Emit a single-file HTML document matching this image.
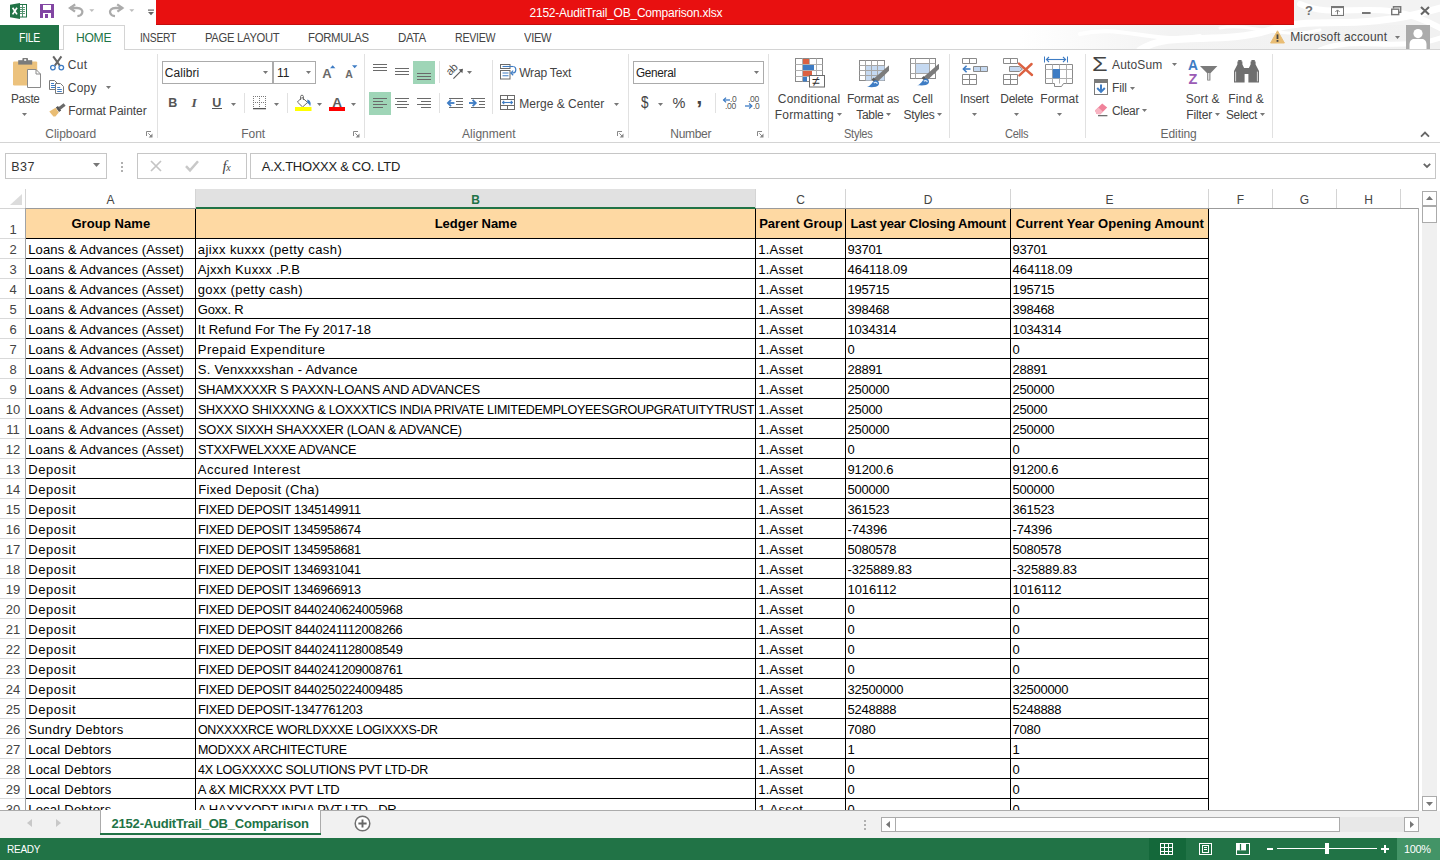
<!DOCTYPE html>
<html lang="en"><head><meta charset="utf-8"><title>2152-AuditTrail_OB_Comparison.xlsx - Excel</title>
<style>
html,body{margin:0;padding:0}
body{width:1440px;height:860px;overflow:hidden;background:#fff;position:relative;font-family:"Liberation Sans",sans-serif;color:#444}
div,svg,span.t{position:absolute}
#title,#tabs,#ribbon,#fbar,#sheetbar,#status,#vscroll{left:0;top:0;width:1440px;height:0}
#grid{left:0;top:0;width:1419px;height:811px;overflow:hidden}
.t{white-space:pre;line-height:1;transform-origin:0 50%}
.clip{overflow:hidden}
svg{overflow:visible;display:block}
</style></head>
<body>
<div id="title">
<div style="left:1020px;top:0;width:420px;height:49px;overflow:hidden"><svg style="left:0;top:0" width="420" height="49" viewBox="0 0 420 49"><defs><linearGradient id="bgw" x1="0" x2="1" y1="0" y2="0"><stop offset="0" stop-color="#fff"/><stop offset="0.35" stop-color="#f3f3f3"/><stop offset="1" stop-color="#f1f1f1"/></linearGradient></defs><rect x="0" y="25" width="420" height="24" fill="url(#bgw)"/><rect x="274" y="0" width="146" height="25" fill="#f3f3f3"/><g fill="none" stroke="#fff" stroke-linecap="round"><path d="M120 50C150 30 200 46 250 30S330 34 420 8" stroke-width="7"/><path d="M60 34C100 24 130 44 180 36" stroke-width="4"/><path d="M280 4C320 22 360 -6 420 28" stroke-width="6"/><path d="M300 50C330 36 380 52 420 38" stroke-width="5"/><path d="M200 28C230 22 260 40 300 30" stroke-width="3"/></g></svg></div>
<div style="left:156px;top:0px;width:1138px;height:25px;background:#e81010;border-bottom:1px solid #c40d0d;box-sizing:border-box;"></div>
<span class="t" style="left:529.50px;top:7px;font-size:12px;color:#fff;letter-spacing:-0.222px;">2152-AuditTrail_OB_Comparison.xlsx</span>
<svg style="left:10px;top:3px" width="17" height="16" viewBox="0 0 17 16"><rect x="8" y="1.5" width="8.5" height="12.5" fill="#fff" stroke="#217346" stroke-width="1"/><path d="M10 4.5h5M10 6.5h5M10 8.5h5M10 10.5h5M12.5 2v12" stroke="#217346" stroke-width="1" opacity=".75"/><path d="M0 1.8L10 0V16L0 14.2z" fill="#217346"/><path d="M2.6 4.8L7 11.4M7 4.8L2.6 11.4" stroke="#fff" stroke-width="1.7"/></svg><svg style="left:40px;top:4px" width="14" height="14" viewBox="0 0 14 14"><path d="M0 0h14v14H0z" fill="#8246a3"/><rect x="3" y="1" width="8" height="5" fill="#fff"/><rect x="3" y="9" width="8" height="5" fill="#fff"/><rect x="5" y="10" width="3" height="4" fill="#8246a3"/></svg><svg style="left:69px;top:4px" width="15" height="14" viewBox="0 0 15 14"><path d="M1 4H8C12 4 14 6.5 13.2 9C12.6 11 10.6 12 8.4 12.2" fill="none" stroke="#ababab" stroke-width="2.3"/><path d="M6.2 0.4L1 4L6 7.6" fill="none" stroke="#ababab" stroke-width="2.3"/></svg><svg style="left:89px;top:9px" width="6" height="4" viewBox="0 0 6 4"><path d="M0.3 0.2h5L2.8 3z" fill="#bdbdbd"/></svg><svg style="left:109px;top:4px" width="15" height="14" viewBox="0 0 15 14"><g transform="translate(14.4 0) scale(-1 1)"><path d="M1 4H8C12 4 14 6.5 13.2 9C12.6 11 10.6 12 8.4 12.2" fill="none" stroke="#ababab" stroke-width="2.3"/><path d="M6.2 0.4L1 4L6 7.6" fill="none" stroke="#ababab" stroke-width="2.3"/></g></svg><svg style="left:129px;top:9px" width="6" height="4" viewBox="0 0 6 4"><path d="M0.3 0.2h5L2.8 3z" fill="#bdbdbd"/></svg><svg style="left:148px;top:9px" width="6" height="7" viewBox="0 0 6 7"><rect x="0" y="0.5" width="6" height="1.2" fill="#666"/><path d="M0 3h6L3 6.2z" fill="#666"/></svg>
<span class="t" style="left:1305px;top:4px;font-size:13px;font-weight:700;color:#707070">?</span><svg style="left:1331px;top:6px" width="14" height="10" viewBox="0 0 14 10"><rect x="0.5" y="0.5" width="12" height="9" fill="none" stroke="#777"/><rect x="0.5" y="0.5" width="12" height="1.6" fill="#777"/><path d="M6.5 8.5V4.2M4.4 6L6.5 3.9L8.6 6" stroke="#777" fill="none" stroke-width="1"/></svg><svg style="left:1362px;top:12px" width="9" height="2" viewBox="0 0 9 2"><rect width="8.6" height="2" fill="#777"/></svg><svg style="left:1391px;top:6px" width="11" height="10" viewBox="0 0 11 10"><path d="M2.5 2.5V0.8h7.2v5.4H8" fill="none" stroke="#777" stroke-width="1.4"/><rect x="0.7" y="3.2" width="7" height="5.4" fill="none" stroke="#777" stroke-width="1.4"/></svg><svg style="left:1420px;top:6px" width="10" height="10" viewBox="0 0 10 10"><path d="M1 1L9 8.5M9 1L1 8.5" stroke="#666" stroke-width="2.1"/></svg>
</div>
<div id="tabs">
<div style="left:59px;top:49px;width:1381px;height:1px;background:#d4d4d4;"></div>
<div style="left:0px;top:25px;width:59px;height:25px;background:#217346;"></div>
<span class="t" style="left:19.20px;top:32px;font-size:12.5px;color:#fff;letter-spacing:-0.300px;transform:scaleX(0.8351);">FILE</span>
<div style="left:63px;top:25px;width:62px;height:25px;background:#fff;border:1px solid #d4d4d4;border-bottom:none;box-sizing:border-box;"></div>
<span class="t" style="left:75.80px;top:32px;font-size:12.5px;color:#217346;letter-spacing:-0.300px;transform:scaleX(0.9699);">HOME</span>
<span class="t" style="left:140.00px;top:32px;font-size:12px;letter-spacing:-0.300px;transform:scaleX(0.8582);">INSERT</span>
<span class="t" style="left:205.00px;top:32px;font-size:12px;letter-spacing:-0.300px;transform:scaleX(0.9347);">PAGE LAYOUT</span>
<span class="t" style="left:308.20px;top:32px;font-size:12px;letter-spacing:-0.300px;transform:scaleX(0.9460);">FORMULAS</span>
<span class="t" style="left:397.80px;top:32px;font-size:12px;letter-spacing:-0.300px;transform:scaleX(0.9613);">DATA</span>
<span class="t" style="left:455.00px;top:32px;font-size:12px;letter-spacing:-0.300px;transform:scaleX(0.8834);">REVIEW</span>
<span class="t" style="left:523.70px;top:32px;font-size:12px;letter-spacing:-0.300px;transform:scaleX(0.9270);">VIEW</span>
<svg style="left:1270px;top:30px" width="15" height="14" viewBox="0 0 15 14"><path d="M7.5 0.8L14.4 13H0.6z" fill="#e9bd74" stroke="#e9bd74" stroke-width="1" stroke-linejoin="round"/><rect x="6.6" y="4.4" width="1.8" height="4.6" fill="#444"/><rect x="6.6" y="10" width="1.8" height="1.8" fill="#444"/></svg><svg style="left:1406px;top:25px" width="24" height="24" viewBox="0 0 24 24"><rect width="24" height="24" fill="#ababab"/><circle cx="12" cy="8.6" r="4.6" fill="#fff"/><path d="M3.5 24V19.5C3.5 15.6 6 14 8 14H16C18 14 20.5 15.6 20.5 19.5V24z" fill="#fff"/></svg>
<span class="t" style="left:1290.20px;top:31px;font-size:12px;letter-spacing:0.172px;">Microsoft account</span>
<svg style="left:1395px;top:36px" width="5" height="3" viewBox="0 0 5 3"><path d="M0 0h5L2.5 3z" fill="#777"/></svg>
</div>
<div id="ribbon">
<div style="left:0px;top:142px;width:1440px;height:1px;background:#d4d4d4;"></div>
<div style="left:157px;top:54px;width:1px;height:84px;background:#e1e1e1;"></div>
<div style="left:364px;top:54px;width:1px;height:84px;background:#e1e1e1;"></div>
<div style="left:628px;top:54px;width:1px;height:84px;background:#e1e1e1;"></div>
<div style="left:768px;top:54px;width:1px;height:84px;background:#e1e1e1;"></div>
<div style="left:949px;top:54px;width:1px;height:84px;background:#e1e1e1;"></div>
<div style="left:1085px;top:54px;width:1px;height:84px;background:#e1e1e1;"></div>
<div style="left:1272px;top:54px;width:1px;height:84px;background:#e1e1e1;"></div>
<div style="left:244px;top:93px;width:1px;height:20px;background:#e1e1e1;"></div>
<div style="left:287px;top:93px;width:1px;height:20px;background:#e1e1e1;"></div>
<div style="left:439px;top:61px;width:1px;height:22px;background:#e1e1e1;"></div>
<div style="left:439px;top:93px;width:1px;height:20px;background:#e1e1e1;"></div>
<div style="left:492px;top:60px;width:1px;height:54px;background:#e1e1e1;"></div>
<div style="left:715px;top:93px;width:1px;height:20px;background:#e1e1e1;"></div>
<span class="t" style="left:45.30px;top:128px;font-size:12px;color:#666;letter-spacing:-0.047px;">Clipboard</span>
<span class="t" style="left:241.20px;top:128px;font-size:12px;color:#666;letter-spacing:-0.005px;">Font</span>
<span class="t" style="left:462.00px;top:128px;font-size:12px;color:#666;letter-spacing:0.016px;">Alignment</span>
<span class="t" style="left:670.30px;top:128px;font-size:12px;color:#666;letter-spacing:-0.300px;">Number</span>
<span class="t" style="left:844.20px;top:128px;font-size:12px;color:#666;letter-spacing:-0.300px;transform:scaleX(0.9234);">Styles</span>
<span class="t" style="left:1005.30px;top:128px;font-size:12px;color:#666;letter-spacing:-0.300px;transform:scaleX(0.9226);">Cells</span>
<span class="t" style="left:1160.50px;top:128px;font-size:12px;color:#666;letter-spacing:-0.067px;">Editing</span>
<svg style="left:146px;top:131px" width="7" height="7" viewBox="0 0 7 7"><path d="M0.5 5V0.5H5" fill="none" stroke="#888"/><path d="M2.3 2.3L5.6 5.6" stroke="#888"/><path d="M6.5 2.6V6.5H2.6z" fill="#888"/></svg>
<svg style="left:353px;top:131px" width="7" height="7" viewBox="0 0 7 7"><path d="M0.5 5V0.5H5" fill="none" stroke="#888"/><path d="M2.3 2.3L5.6 5.6" stroke="#888"/><path d="M6.5 2.6V6.5H2.6z" fill="#888"/></svg>
<svg style="left:617px;top:131px" width="7" height="7" viewBox="0 0 7 7"><path d="M0.5 5V0.5H5" fill="none" stroke="#888"/><path d="M2.3 2.3L5.6 5.6" stroke="#888"/><path d="M6.5 2.6V6.5H2.6z" fill="#888"/></svg>
<svg style="left:757px;top:131px" width="7" height="7" viewBox="0 0 7 7"><path d="M0.5 5V0.5H5" fill="none" stroke="#888"/><path d="M2.3 2.3L5.6 5.6" stroke="#888"/><path d="M6.5 2.6V6.5H2.6z" fill="#888"/></svg>
<svg style="left:13px;top:58px" width="29" height="30" viewBox="0 0 29 30"><rect x="0" y="3.4" width="24.2" height="24" rx="1.2" fill="#ecc27d"/><rect x="5.2" y="2.2" width="14" height="4.4" fill="#7b7b7b"/><rect x="9.4" y="0" width="5.6" height="3.4" rx="0.8" fill="#7b7b7b"/><rect x="11.2" y="1.2" width="2" height="1.6" fill="#fff"/><path d="M14.5 11.5H23L27.5 16V29.5H14.5z" fill="#fff" stroke="#8a8a8a"/><path d="M23 11.5V16H27.5" fill="none" stroke="#8a8a8a"/></svg>
<span class="t" style="left:10.80px;top:93px;font-size:12px;letter-spacing:-0.300px;transform:scaleX(0.9801);">Paste</span>
<svg style="left:22px;top:113px" width="5" height="3" viewBox="0 0 5 3"><path d="M0 0h5L2.5 3z" fill="#777"/></svg>
<svg style="left:50px;top:56px" width="15" height="15" viewBox="0 0 15 15"><path d="M3.2 0.4L9.8 9.6M11.4 0.4L4.8 9.6" stroke="#666" stroke-width="2" fill="none"/><circle cx="2.9" cy="11.6" r="2.3" fill="none" stroke="#3e7cc4" stroke-width="1.3"/><circle cx="11.3" cy="11.6" r="2.3" fill="none" stroke="#3e7cc4" stroke-width="1.3"/></svg>
<span class="t" style="left:67.80px;top:59px;font-size:12px;letter-spacing:0.356px;">Cut</span>
<svg style="left:49px;top:80px" width="16" height="14" viewBox="0 0 16 14"><path d="M0.5 0.5H5.5L8.5 3.5V9.5H0.5z" fill="#fff" stroke="#7a7a7a"/><path d="M2 3.5h3M2 5.5h4.5M2 7.5h4.5" stroke="#3e7cc4"/><path d="M6.5 3.5H11.5L14.5 6.5V13.5H6.5z" fill="#fff" stroke="#7a7a7a"/><path d="M8.2 7.5h3M8.2 9.5h4.6M8.2 11.5h4.6" stroke="#3e7cc4"/></svg>
<span class="t" style="left:67.80px;top:82px;font-size:12px;letter-spacing:0.228px;">Copy</span>
<svg style="left:106px;top:86px" width="5" height="3" viewBox="0 0 5 3"><path d="M0 0h5L2.5 3z" fill="#777"/></svg>
<svg style="left:49px;top:103px" width="17" height="14" viewBox="0 0 17 14"><path d="M9.4 4.2L14.6 0.2L16.6 2.8L11.4 6.8z" fill="#6a6a6a"/><path d="M6.8 4.4L9 3L12.2 7.6L10 9z" fill="#555"/><path d="M0.3 8.6L6.6 4.8L9.8 9.4L6.4 13.6L4.4 13.4z" fill="#e9bd74"/></svg>
<span class="t" style="left:68.20px;top:105px;font-size:12px;letter-spacing:-0.066px;">Format Painter</span>
<div style="left:162px;top:61px;width:111px;height:23px;background:#fff;border:1px solid #ababab;box-sizing:border-box;"></div>
<div style="left:273px;top:61px;width:43px;height:23px;background:#fff;border:1px solid #ababab;box-sizing:border-box;"></div>
<span class="t" style="left:164.80px;top:67px;font-size:12px;color:#222;letter-spacing:0.064px;">Calibri</span>
<svg style="left:263px;top:71px" width="5" height="3" viewBox="0 0 5 3"><path d="M0 0h5L2.5 3z" fill="#777"/></svg>
<span class="t" style="left:277.00px;top:67px;font-size:12px;color:#222;">11</span>
<svg style="left:306px;top:71px" width="5" height="3" viewBox="0 0 5 3"><path d="M0 0h5L2.5 3z" fill="#777"/></svg>
<span class="t" style="left:322.2px;top:66.7px;font-size:13px;font-weight:700;color:#6a6a6a">A</span><svg style="left:329.7px;top:65px" width="6" height="4" viewBox="0 0 6 4"><path d="M0 3.2L2.7 0.2L5.4 3.2z" fill="#3e7cc4"/></svg>
<span class="t" style="left:345.2px;top:68.8px;font-size:10.5px;font-weight:700;color:#6a6a6a">A</span><svg style="left:352px;top:65px" width="6" height="4" viewBox="0 0 6 4"><path d="M0 0.2h5.4L2.7 3.2z" fill="#3e7cc4"/></svg>
<span class="t" style="left:168.30px;top:97px;font-size:12.5px;font-weight:700;color:#555;">B</span>
<span class="t" style="left:191.50px;top:96px;font-size:13.5px;font-style:italic;color:#555;font-family:'Liberation Serif',serif;font-weight:700;">I</span>
<span class="t" style="left:212.30px;top:97px;font-size:12.5px;font-weight:700;color:#555;">U</span>
<div style="left:212px;top:108px;width:10px;height:1px;background:#555;"></div>
<svg style="left:231px;top:103px" width="5" height="3" viewBox="0 0 5 3"><path d="M0 0h5L2.5 3z" fill="#777"/></svg>
<svg style="left:253px;top:96px" width="14" height="14" viewBox="0 0 14 14"><g fill="#7a7a7a" shape-rendering="crispEdges"><rect x="0" y="0" width="1" height="1"/><rect x="0" y="6" width="1" height="1"/><rect x="2" y="0" width="1" height="1"/><rect x="2" y="6" width="1" height="1"/><rect x="4" y="0" width="1" height="1"/><rect x="4" y="6" width="1" height="1"/><rect x="6" y="0" width="1" height="1"/><rect x="6" y="6" width="1" height="1"/><rect x="8" y="0" width="1" height="1"/><rect x="8" y="6" width="1" height="1"/><rect x="10" y="0" width="1" height="1"/><rect x="10" y="6" width="1" height="1"/><rect x="12" y="0" width="1" height="1"/><rect x="12" y="6" width="1" height="1"/><rect x="0" y="0" width="1" height="1"/><rect x="6" y="0" width="1" height="1"/><rect x="12" y="0" width="1" height="1"/><rect x="0" y="2" width="1" height="1"/><rect x="6" y="2" width="1" height="1"/><rect x="12" y="2" width="1" height="1"/><rect x="0" y="4" width="1" height="1"/><rect x="6" y="4" width="1" height="1"/><rect x="12" y="4" width="1" height="1"/><rect x="0" y="6" width="1" height="1"/><rect x="6" y="6" width="1" height="1"/><rect x="12" y="6" width="1" height="1"/><rect x="0" y="8" width="1" height="1"/><rect x="6" y="8" width="1" height="1"/><rect x="12" y="8" width="1" height="1"/><rect x="0" y="10" width="1" height="1"/><rect x="6" y="10" width="1" height="1"/><rect x="12" y="10" width="1" height="1"/></g><rect x="0" y="12" width="13" height="1.3" fill="#555"/></svg>
<svg style="left:274px;top:103px" width="5" height="3" viewBox="0 0 5 3"><path d="M0 0h5L2.5 3z" fill="#777"/></svg>
<svg style="left:295px;top:94px" width="17" height="17" viewBox="0 0 17 17"><path d="M7 3.4L12.6 8.4L7.6 13L2.4 8z" fill="#fff" stroke="#6a6a6a" stroke-width="1"/><path d="M5.6 6V2.4C5.6 0.8 8.4 0.8 8.4 2.4V6" fill="none" stroke="#6a6a6a"/><path d="M12.4 5.6C15.4 6.6 16.6 9.6 15 12.4C14.6 10.4 13.6 9.6 12.2 9z" fill="#3e7cc4"/><rect x="0" y="13" width="16.5" height="4" fill="#ffff00"/></svg>
<svg style="left:317px;top:103px" width="5" height="3" viewBox="0 0 5 3"><path d="M0 0h5L2.5 3z" fill="#777"/></svg>
<span class="t" style="left:332.2px;top:96px;font-size:13.5px;font-weight:700;color:#5e5e5e">A</span><svg style="left:329px;top:107px" width="16" height="4" viewBox="0 0 16 4"><rect width="16" height="4" fill="#ff0000"/></svg>
<svg style="left:351px;top:103px" width="5" height="3" viewBox="0 0 5 3"><path d="M0 0h5L2.5 3z" fill="#777"/></svg>
<div style="left:413px;top:61px;width:22px;height:23px;background:#9fd5b7;"></div>
<div style="left:369px;top:92px;width:22px;height:23px;background:#9fd5b7;"></div>
<div style="left:373px;top:64px;width:14px;height:1px;background:#6a6a6a"></div><div style="left:373px;top:67px;width:14px;height:1px;background:#6a6a6a"></div><div style="left:373px;top:70px;width:14px;height:1px;background:#6a6a6a"></div>
<div style="left:395px;top:68px;width:14px;height:1px;background:#6a6a6a"></div><div style="left:395px;top:71px;width:14px;height:1px;background:#6a6a6a"></div><div style="left:395px;top:74px;width:14px;height:1px;background:#6a6a6a"></div>
<div style="left:417px;top:73px;width:14px;height:1px;background:#6a6a6a"></div><div style="left:417px;top:76px;width:14px;height:1px;background:#6a6a6a"></div><div style="left:417px;top:79px;width:14px;height:1px;background:#6a6a6a"></div>
<div style="left:373px;top:98px;width:14px;height:1px;background:#6a6a6a"></div><div style="left:373px;top:101px;width:10px;height:1px;background:#6a6a6a"></div><div style="left:373px;top:104px;width:14px;height:1px;background:#6a6a6a"></div><div style="left:373px;top:107px;width:10px;height:1px;background:#6a6a6a"></div>
<div style="left:395.0px;top:98px;width:14px;height:1px;background:#6a6a6a"></div><div style="left:397.0px;top:101px;width:10px;height:1px;background:#6a6a6a"></div><div style="left:395.0px;top:104px;width:14px;height:1px;background:#6a6a6a"></div><div style="left:397.0px;top:107px;width:10px;height:1px;background:#6a6a6a"></div>
<div style="left:417px;top:98px;width:14px;height:1px;background:#6a6a6a"></div><div style="left:421px;top:101px;width:10px;height:1px;background:#6a6a6a"></div><div style="left:417px;top:104px;width:14px;height:1px;background:#6a6a6a"></div><div style="left:421px;top:107px;width:10px;height:1px;background:#6a6a6a"></div>
<span class="t" style="left:445.8px;top:64.2px;font-size:11px;color:#505050;transform:rotate(-45deg);transform-origin:50% 50%;letter-spacing:-0.3px">ab</span><svg style="left:447px;top:63px" width="17" height="17" viewBox="0 0 17 17"><path d="M6.4 15.6L14.4 7.6" stroke="#5a5a5a" stroke-width="1.2"/><path d="M16 5.8L15.4 10.2L11.6 6.4z" fill="#5a5a5a"/></svg>
<svg style="left:467px;top:71px" width="5" height="3" viewBox="0 0 5 3"><path d="M0 0h5L2.5 3z" fill="#777"/></svg>
<svg style="left:447px;top:96px" width="17" height="13" viewBox="0 0 17 13"><path d="M2 2.5h14M9 5.5h7M9 8.5h7M2 11.5h14" stroke="#6a6a6a" fill="none"/><rect x="0" y="4" width="8.4" height="6" fill="#fff"/><path d="M1 7H7.4" stroke="#3e7cc4" stroke-width="1.8"/><path d="M4 3.8L0.9 7L4 10.2" stroke="#3e7cc4" stroke-width="1.8" fill="none"/></svg>
<svg style="left:469px;top:96px" width="17" height="13" viewBox="0 0 17 13"><path d="M2 2.5h14M10 5.5h6M10 8.5h6M2 11.5h14" stroke="#6a6a6a" fill="none"/><rect x="0" y="4" width="8.4" height="6" fill="#fff"/><path d="M0 7H6.4" stroke="#3e7cc4" stroke-width="1.8"/><path d="M3.6 3.8L6.8 7L3.6 10.2" stroke="#3e7cc4" stroke-width="1.8" fill="none"/></svg>
<svg style="left:500px;top:64px" width="17" height="16" viewBox="0 0 17 16"><rect x="0.5" y="0.5" width="9.5" height="4" fill="#fff" stroke="#6a6a6a"/><rect x="0.5" y="6.5" width="9.5" height="8.5" fill="#fff" stroke="#6a6a6a"/><path d="M2.5 2.5h11" stroke="#3e7cc4" stroke-width="1.1"/><path d="M2.5 9h6M2.5 11.8h6" stroke="#3e7cc4" stroke-width="1.1"/><path d="M13.5 2.5C16.6 3 16.6 8.8 13.4 8.9H11.4" fill="none" stroke="#3e7cc4" stroke-width="1.2"/><path d="M13.2 6.6L10.8 8.9L13.2 11.2" fill="none" stroke="#3e7cc4" stroke-width="1.2"/></svg>
<span class="t" style="left:519.20px;top:67px;font-size:12px;letter-spacing:-0.185px;">Wrap Text</span>
<svg style="left:500px;top:95px" width="16" height="16" viewBox="0 0 16 16"><rect x="0.5" y="0.5" width="14" height="14" fill="#fff" stroke="#6a6a6a"/><path d="M0.5 4.5h14M0.5 10.5h14M7.5 0.5v4M7.5 10.5v4" stroke="#6a6a6a" fill="none"/><path d="M2.6 7.5h9.8" stroke="#3e7cc4" stroke-width="1.1"/><path d="M4.2 5.9L2.6 7.5L4.2 9.1M10.8 5.9L12.4 7.5L10.8 9.1" stroke="#3e7cc4" fill="none" stroke-width="1.1"/></svg>
<span class="t" style="left:519.20px;top:98px;font-size:12px;letter-spacing:0.031px;">Merge &amp; Center</span>
<svg style="left:614px;top:103px" width="5" height="3" viewBox="0 0 5 3"><path d="M0 0h5L2.5 3z" fill="#777"/></svg>
<div style="left:633px;top:61px;width:131px;height:23px;background:#fff;border:1px solid #ababab;box-sizing:border-box;"></div>
<span class="t" style="left:636.20px;top:67px;font-size:12px;color:#222;letter-spacing:-0.300px;transform:scaleX(0.9804);">General</span>
<svg style="left:754px;top:71px" width="5" height="3" viewBox="0 0 5 3"><path d="M0 0h5L2.5 3z" fill="#777"/></svg>
<span class="t" style="left:640.60px;top:94px;font-size:16.5px;transform:scaleX(0.82);">$</span>
<svg style="left:658px;top:103px" width="5" height="3" viewBox="0 0 5 3"><path d="M0 0h5L2.5 3z" fill="#777"/></svg>
<span class="t" style="left:672.50px;top:96px;font-size:14.5px;">%</span>
<span class="t" style="left:696.30px;top:98px;font-size:22px;font-weight:700;">’</span>
<span class="t" style="left:730px;top:95px;font-size:8.5px;color:#555;letter-spacing:-0.3px">.0</span><span class="t" style="left:725px;top:102px;font-size:8.5px;color:#555;letter-spacing:-0.3px">.00</span><svg style="left:723px;top:97px" width="8" height="6" viewBox="0 0 8 6"><path d="M0.6 3H7" stroke="#3e7cc4" stroke-width="1.3"/><path d="M3 0.6L0.6 3L3 5.4" fill="none" stroke="#3e7cc4" stroke-width="1.3"/></svg>
<span class="t" style="left:748px;top:95px;font-size:8.5px;color:#555;letter-spacing:-0.3px">.00</span><span class="t" style="left:753px;top:102px;font-size:8.5px;color:#555;letter-spacing:-0.3px">.0</span><svg style="left:745px;top:103px" width="8" height="6" viewBox="0 0 8 6"><path d="M0 3H6.6" stroke="#3e7cc4" stroke-width="1.3"/><path d="M4.2 0.6L6.8 3L4.2 5.4" fill="none" stroke="#3e7cc4" stroke-width="1.3"/></svg>
<svg style="left:795px;top:58px" width="31" height="30" viewBox="0 0 31 30"><rect x="0.5" y="0.5" width="27" height="23" fill="#fff" stroke="#8a8a8a"/><path d="M0.5 6.5h27M0.5 12.5h27M0.5 18.5h27M7.5 0.5v23M14.5 0.5v23M21.5 0.5v23" stroke="#b0b0b0" fill="none"/><rect x="8" y="1" width="6" height="5" fill="#dc6141"/><rect x="8" y="7" width="11" height="5" fill="#3e7cc4"/><rect x="8" y="13" width="9" height="5" fill="#dc6141"/><rect x="8" y="19" width="4" height="4.5" fill="#3e7cc4"/><rect x="14.5" y="17.5" width="15" height="11.5" fill="#fff" stroke="#6a6a6a"/></svg><span class="t" style="left:812.2px;top:74.4px;font-size:14px;color:#333">≠</span>
<span class="t" style="left:777.80px;top:93px;font-size:12px;letter-spacing:0.235px;">Conditional</span>
<span class="t" style="left:774.80px;top:109px;font-size:12px;letter-spacing:0.182px;">Formatting</span>
<svg style="left:837px;top:113px" width="5" height="3" viewBox="0 0 5 3"><path d="M0 0h5L2.5 3z" fill="#777"/></svg>
<svg style="left:859px;top:60px" width="31" height="28" viewBox="0 0 31 28"><rect x="0.5" y="0.5" width="25" height="20" fill="#fff" stroke="#8a8a8a"/><rect x="7" y="6" width="18.5" height="14.5" fill="#c5d9f1"/><path d="M0.5 5.5h25M0.5 10.5h25M0.5 15.5h25M6.5 0.5v20M12.5 0.5v20M18.5 0.5v20" stroke="#a6a6a6" fill="none"/><g transform="translate(0 0)"><path d="M15.2 18.2L29.2 6L30 5.6L30 10.8L18.6 21.8z" fill="#7b7b7b"/><path d="M12.6 19.6L14.8 17.6L19 21.6L16.8 23.8z" fill="#5e5e5e"/><path d="M8 27C12 26 13 22.2 15.4 20.6C18 19.4 21.2 22 19.6 25C18 27.6 13 27.2 8 27z" fill="#3e7cc4"/><path d="M14.8 23C16 21.8 18 22.2 18.2 23.8" fill="none" stroke="#dbe8f6" stroke-width="1.3"/></g></svg>
<span class="t" style="left:847.00px;top:93px;font-size:12px;letter-spacing:-0.227px;">Format as</span>
<span class="t" style="left:856.20px;top:109px;font-size:12px;letter-spacing:-0.300px;">Table</span>
<svg style="left:886px;top:113px" width="5" height="3" viewBox="0 0 5 3"><path d="M0 0h5L2.5 3z" fill="#777"/></svg>
<svg style="left:910px;top:58px" width="31" height="28" viewBox="0 0 31 28"><rect x="0.5" y="0.5" width="25" height="20" fill="#fff" stroke="#8a8a8a"/><path d="M0.5 5.5h25M0.5 15.5h25M5.5 0.5v20M19.5 0.5v20" stroke="#a6a6a6" fill="none"/><rect x="6" y="6" width="13" height="9" fill="#c5d9f1"/><g transform="translate(-1 0.3)"><path d="M15.2 18.2L29.2 6L30 5.6L30 10.8L18.6 21.8z" fill="#7b7b7b"/><path d="M12.6 19.6L14.8 17.6L19 21.6L16.8 23.8z" fill="#5e5e5e"/><path d="M8 27C12 26 13 22.2 15.4 20.6C18 19.4 21.2 22 19.6 25C18 27.6 13 27.2 8 27z" fill="#3e7cc4"/><path d="M14.8 23C16 21.8 18 22.2 18.2 23.8" fill="none" stroke="#dbe8f6" stroke-width="1.3"/></g></svg>
<span class="t" style="left:912.50px;top:93px;font-size:12px;letter-spacing:-0.057px;">Cell</span>
<span class="t" style="left:903.50px;top:109px;font-size:12px;letter-spacing:-0.300px;">Styles</span>
<svg style="left:937px;top:113px" width="5" height="3" viewBox="0 0 5 3"><path d="M0 0h5L2.5 3z" fill="#777"/></svg>
<svg style="left:962px;top:58px" width="27" height="27" viewBox="0 0 27 27"><path d="M0.5 0.5h14v5h-14zM7.5 0.5v5" fill="#fff" stroke="#8a8a8a"/><path d="M11.5 8.5h14v5h-14z" fill="#c5d9f1" stroke="#8a8a8a"/><path d="M18.5 8.5v5" stroke="#8a8a8a"/><path d="M0.5 16.5h14v10h-14zM0.5 21.5h14M7.5 16.5v10" fill="#fff" stroke="#8a8a8a"/><path d="M1.4 11H8.5" stroke="#3e7cc4" stroke-width="1.6"/><path d="M4.6 7.8L1.4 11L4.6 14.2" fill="none" stroke="#3e7cc4" stroke-width="1.6"/></svg>
<span class="t" style="left:960.00px;top:93px;font-size:12px;letter-spacing:-0.163px;">Insert</span>
<svg style="left:972px;top:113px" width="5" height="3" viewBox="0 0 5 3"><path d="M0 0h5L2.5 3z" fill="#777"/></svg>
<svg style="left:1003px;top:58px" width="30" height="28" viewBox="0 0 30 28"><path d="M0.5 0.5h14v5h-14zM7.5 0.5v5" fill="#fff" stroke="#8a8a8a"/><path d="M6.5 8.5h10l3 2.5l-3 2.5h-10z" fill="#c5d9f1" stroke="#8a8a8a"/><path d="M0.5 16.5h14v10h-14zM0.5 21.5h14M7.5 16.5v10" fill="#fff" stroke="#8a8a8a"/><path d="M16 5.6L29 17M28.6 6L16.4 17.4" stroke="#dc6141" stroke-width="2.4" fill="none" stroke-linecap="round"/></svg>
<span class="t" style="left:1000.30px;top:93px;font-size:12px;letter-spacing:-0.297px;">Delete</span>
<svg style="left:1014px;top:113px" width="5" height="3" viewBox="0 0 5 3"><path d="M0 0h5L2.5 3z" fill="#777"/></svg>
<svg style="left:1044px;top:56px" width="29" height="32" viewBox="0 0 29 32"><path d="M0.5 0.5v6M23.5 0.5v6" stroke="#3e7cc4"/><path d="M2.5 3.5h19" stroke="#3e7cc4" stroke-width="1.1"/><path d="M5 1L2.4 3.5L5 6M19 1L21.6 3.5L19 6" fill="none" stroke="#3e7cc4" stroke-width="1.1"/><path d="M1.5 8.5h27v19h-9l-2 3h-7l0-3h-9z" fill="#fff" stroke="#8a8a8a"/><path d="M1.5 13.5h27M1.5 22.5h27M8.5 8.5v19M15.5 8.5v19M22.5 8.5v19" stroke="#b0b0b0" fill="none"/><rect x="8.7" y="13" width="7.3" height="9.2" fill="#3e7cc4"/></svg>
<span class="t" style="left:1040.30px;top:93px;font-size:12px;letter-spacing:0.037px;">Format</span>
<svg style="left:1057px;top:113px" width="5" height="3" viewBox="0 0 5 3"><path d="M0 0h5L2.5 3z" fill="#777"/></svg>
<span class="t" style="left:1092.4px;top:53px;font-size:21px;color:#444;transform:scaleX(1.2)">Σ</span>
<span class="t" style="left:1112.00px;top:59px;font-size:12px;letter-spacing:0.140px;">AutoSum</span>
<svg style="left:1172px;top:63px" width="5" height="3" viewBox="0 0 5 3"><path d="M0 0h5L2.5 3z" fill="#777"/></svg>
<svg style="left:1094px;top:79px" width="15" height="16" viewBox="0 0 15 16"><rect x="0.5" y="0.5" width="13" height="15" fill="#fff" stroke="#7a7a7a"/><rect x="0" y="0" width="14" height="4" fill="#7a7a7a"/><path d="M7 5.6V13" stroke="#3e7cc4" stroke-width="2"/><path d="M3.2 9L7 12.9L10.8 9" fill="none" stroke="#3e7cc4" stroke-width="2"/></svg>
<span class="t" style="left:1112.00px;top:82px;font-size:12px;letter-spacing:-0.176px;">Fill</span>
<svg style="left:1130px;top:87px" width="5" height="3" viewBox="0 0 5 3"><path d="M0 0h5L2.5 3z" fill="#777"/></svg>
<svg style="left:1094px;top:103px" width="15" height="14" viewBox="0 0 15 14"><path d="M1 7.6L8.2 0.6L13.2 4.6L6.4 11.2L2.6 11z" fill="#f0829a"/><path d="M1 7.6L4.4 4.4L8.8 8.6L6.4 11.2L2.6 11z" fill="#f7b4c2"/><path d="M4 12.7h9.4" stroke="#555" stroke-width="1.1"/></svg>
<span class="t" style="left:1112.00px;top:105px;font-size:12px;letter-spacing:-0.300px;">Clear</span>
<svg style="left:1142px;top:109px" width="5" height="3" viewBox="0 0 5 3"><path d="M0 0h5L2.5 3z" fill="#777"/></svg>
<span class="t" style="left:1188.3px;top:57.5px;font-size:14.5px;font-weight:700;color:#3e7cc4;transform:scaleX(0.95)">A</span><span class="t" style="left:1188.6px;top:72px;font-size:14.5px;font-weight:700;color:#9b5bb5;">Z</span><svg style="left:1200px;top:65.5px" width="18" height="16" viewBox="0 0 18 16"><path d="M0 0H17.4L10.4 7.2V14.6H7.2V7.2z" fill="#7b7b7b"/><rect x="8.2" y="7" width="1.2" height="6.8" fill="#fff" opacity=".9"/></svg>
<span class="t" style="left:1185.80px;top:93px;font-size:12px;letter-spacing:0.068px;">Sort &amp;</span>
<span class="t" style="left:1186.20px;top:109px;font-size:12px;letter-spacing:-0.134px;">Filter</span>
<svg style="left:1215px;top:113px" width="5" height="3" viewBox="0 0 5 3"><path d="M0 0h5L2.5 3z" fill="#777"/></svg>
<svg style="left:1233px;top:60px" width="27" height="23" viewBox="0 0 27 23"><path d="M1 22.4V11L4.4 4.4V1.4H9.4V4.4L11.6 9V22.4z" fill="#6f6f6f"/><path d="M26 22.4V11L22.6 4.4V1.4H17.6V4.4L15.4 9V22.4z" fill="#6f6f6f"/><rect x="11" y="8" width="5" height="6" fill="#6f6f6f"/><rect x="5.2" y="0" width="3.4" height="2" fill="#6f6f6f"/><rect x="18.4" y="0" width="3.4" height="2" fill="#6f6f6f"/><path d="M2.6 21.4V11.6M24.4 21.4V11.6" stroke="#d8d8d8" stroke-width="1"/></svg>
<span class="t" style="left:1228.20px;top:93px;font-size:12px;letter-spacing:0.183px;">Find &amp;</span>
<span class="t" style="left:1225.80px;top:109px;font-size:12px;letter-spacing:-0.300px;transform:scaleX(0.9856);">Select</span>
<svg style="left:1260px;top:113px" width="5" height="3" viewBox="0 0 5 3"><path d="M0 0h5L2.5 3z" fill="#777"/></svg>
<svg style="left:1420px;top:131px" width="10" height="7" viewBox="0 0 10 7"><path d="M1 5.6L5 1.6L9 5.6" fill="none" stroke="#666" stroke-width="1.8"/></svg>
</div>
<div id="fbar">
<div style="left:5px;top:153px;width:102px;height:26px;background:#fff;border:1px solid #c6c6c6;box-sizing:border-box;"></div>
<span class="t" style="left:11.20px;top:161px;font-size:12.5px;color:#333;letter-spacing:0.525px;">B37</span>
<svg style="left:93px;top:163px" width="7" height="4" viewBox="0 0 7 4"><path d="M0 0h7L3.5 4z" fill="#777"/></svg>
<div style="left:121px;top:162px;width:2px;height:2px;background:#b0b0b0;"></div>
<div style="left:121px;top:166px;width:2px;height:2px;background:#b0b0b0;"></div>
<div style="left:121px;top:170px;width:2px;height:2px;background:#b0b0b0;"></div>
<div style="left:137px;top:153px;width:110px;height:26px;background:#fff;border:1px solid #c6c6c6;box-sizing:border-box;"></div>
<svg style="left:150px;top:160px" width="12" height="12" viewBox="0 0 12 12"><path d="M1 1L11 11M11 1L1 11" stroke="#c4c4c4" stroke-width="1.7"/></svg><svg style="left:185px;top:160px" width="14" height="12" viewBox="0 0 14 12"><path d="M1 6.2L5 10.4L13 1.2" fill="none" stroke="#c8c8c8" stroke-width="2.5"/></svg><span class="t" style="left:222.5px;top:158.5px;font-size:15px;font-style:italic;font-family:'Liberation Serif',serif;color:#444;letter-spacing:-0.5px">f<span style="font-size:10px;position:relative;top:0.5px">x</span></span>
<div style="left:250px;top:153px;width:1186px;height:26px;background:#fff;border:1px solid #c6c6c6;box-sizing:border-box;"></div>
<span class="t" style="left:261.80px;top:160px;font-size:13px;color:#222;letter-spacing:-0.300px;">A.X.THOXXX &amp; CO. LTD</span>
<svg style="left:1423px;top:163px" width="8" height="6" viewBox="0 0 8 6"><path d="M0.8 0.8L4 4L7.2 0.8" fill="none" stroke="#666" stroke-width="1.8"/></svg>
</div>
<div id="grid">
<div style="left:196px;top:189px;width:560px;height:18px;background:#e1e1e1;"></div>
<div style="left:0px;top:208px;width:25px;height:1px;background:#d4d4d4;"></div>
<div style="left:25px;top:208px;width:1394px;height:1px;background:#9b9b9b;"></div>
<div style="left:196px;top:207px;width:560px;height:2px;background:#217346;"></div>
<div style="left:195px;top:189px;width:1px;height:19px;background:#d4d4d4;"></div>
<span class="t" style="left:106.49px;top:194px;font-size:12px;">A</span>
<div style="left:755px;top:189px;width:1px;height:19px;background:#d4d4d4;"></div>
<span class="t" style="left:471.16px;top:194px;font-size:12px;font-weight:700;color:#217346;">B</span>
<div style="left:845px;top:189px;width:1px;height:19px;background:#d4d4d4;"></div>
<span class="t" style="left:796.16px;top:194px;font-size:12px;">C</span>
<div style="left:1010px;top:189px;width:1px;height:19px;background:#d4d4d4;"></div>
<span class="t" style="left:923.66px;top:194px;font-size:12px;">D</span>
<div style="left:1208px;top:189px;width:1px;height:19px;background:#d4d4d4;"></div>
<span class="t" style="left:1105.49px;top:194px;font-size:12px;">E</span>
<div style="left:1272px;top:189px;width:1px;height:19px;background:#d4d4d4;"></div>
<span class="t" style="left:1236.83px;top:194px;font-size:12px;">F</span>
<div style="left:1336px;top:189px;width:1px;height:19px;background:#d4d4d4;"></div>
<span class="t" style="left:1299.83px;top:194px;font-size:12px;">G</span>
<div style="left:1400px;top:189px;width:1px;height:19px;background:#d4d4d4;"></div>
<span class="t" style="left:1364.16px;top:194px;font-size:12px;">H</span>
<div style="left:25px;top:189px;width:1px;height:19px;background:#d4d4d4;"></div>
<svg style="left:10px;top:194px" width="12" height="11" viewBox="0 0 12 11"><path d="M12 0V11H0z" fill="#dcdcdc"/></svg>
<div style="left:1418px;top:208px;width:1px;height:603px;background:#ababab;"></div>
<div style="left:26px;top:209px;width:1182px;height:29px;background:#fed9a3;"></div>
<div style="left:26px;top:238px;width:1183px;height:1px;background:#000;"></div>
<div style="left:0px;top:238px;width:25px;height:1px;background:#d9d9d9;"></div>
<div style="left:26px;top:258px;width:1183px;height:1px;background:#000;"></div>
<div style="left:0px;top:258px;width:25px;height:1px;background:#d9d9d9;"></div>
<div style="left:26px;top:278px;width:1183px;height:1px;background:#000;"></div>
<div style="left:0px;top:278px;width:25px;height:1px;background:#d9d9d9;"></div>
<div style="left:26px;top:298px;width:1183px;height:1px;background:#000;"></div>
<div style="left:0px;top:298px;width:25px;height:1px;background:#d9d9d9;"></div>
<div style="left:26px;top:318px;width:1183px;height:1px;background:#000;"></div>
<div style="left:0px;top:318px;width:25px;height:1px;background:#d9d9d9;"></div>
<div style="left:26px;top:338px;width:1183px;height:1px;background:#000;"></div>
<div style="left:0px;top:338px;width:25px;height:1px;background:#d9d9d9;"></div>
<div style="left:26px;top:358px;width:1183px;height:1px;background:#000;"></div>
<div style="left:0px;top:358px;width:25px;height:1px;background:#d9d9d9;"></div>
<div style="left:26px;top:378px;width:1183px;height:1px;background:#000;"></div>
<div style="left:0px;top:378px;width:25px;height:1px;background:#d9d9d9;"></div>
<div style="left:26px;top:398px;width:1183px;height:1px;background:#000;"></div>
<div style="left:0px;top:398px;width:25px;height:1px;background:#d9d9d9;"></div>
<div style="left:26px;top:418px;width:1183px;height:1px;background:#000;"></div>
<div style="left:0px;top:418px;width:25px;height:1px;background:#d9d9d9;"></div>
<div style="left:26px;top:438px;width:1183px;height:1px;background:#000;"></div>
<div style="left:0px;top:438px;width:25px;height:1px;background:#d9d9d9;"></div>
<div style="left:26px;top:458px;width:1183px;height:1px;background:#000;"></div>
<div style="left:0px;top:458px;width:25px;height:1px;background:#d9d9d9;"></div>
<div style="left:26px;top:478px;width:1183px;height:1px;background:#000;"></div>
<div style="left:0px;top:478px;width:25px;height:1px;background:#d9d9d9;"></div>
<div style="left:26px;top:498px;width:1183px;height:1px;background:#000;"></div>
<div style="left:0px;top:498px;width:25px;height:1px;background:#d9d9d9;"></div>
<div style="left:26px;top:518px;width:1183px;height:1px;background:#000;"></div>
<div style="left:0px;top:518px;width:25px;height:1px;background:#d9d9d9;"></div>
<div style="left:26px;top:538px;width:1183px;height:1px;background:#000;"></div>
<div style="left:0px;top:538px;width:25px;height:1px;background:#d9d9d9;"></div>
<div style="left:26px;top:558px;width:1183px;height:1px;background:#000;"></div>
<div style="left:0px;top:558px;width:25px;height:1px;background:#d9d9d9;"></div>
<div style="left:26px;top:578px;width:1183px;height:1px;background:#000;"></div>
<div style="left:0px;top:578px;width:25px;height:1px;background:#d9d9d9;"></div>
<div style="left:26px;top:598px;width:1183px;height:1px;background:#000;"></div>
<div style="left:0px;top:598px;width:25px;height:1px;background:#d9d9d9;"></div>
<div style="left:26px;top:618px;width:1183px;height:1px;background:#000;"></div>
<div style="left:0px;top:618px;width:25px;height:1px;background:#d9d9d9;"></div>
<div style="left:26px;top:638px;width:1183px;height:1px;background:#000;"></div>
<div style="left:0px;top:638px;width:25px;height:1px;background:#d9d9d9;"></div>
<div style="left:26px;top:658px;width:1183px;height:1px;background:#000;"></div>
<div style="left:0px;top:658px;width:25px;height:1px;background:#d9d9d9;"></div>
<div style="left:26px;top:678px;width:1183px;height:1px;background:#000;"></div>
<div style="left:0px;top:678px;width:25px;height:1px;background:#d9d9d9;"></div>
<div style="left:26px;top:698px;width:1183px;height:1px;background:#000;"></div>
<div style="left:0px;top:698px;width:25px;height:1px;background:#d9d9d9;"></div>
<div style="left:26px;top:718px;width:1183px;height:1px;background:#000;"></div>
<div style="left:0px;top:718px;width:25px;height:1px;background:#d9d9d9;"></div>
<div style="left:26px;top:738px;width:1183px;height:1px;background:#000;"></div>
<div style="left:0px;top:738px;width:25px;height:1px;background:#d9d9d9;"></div>
<div style="left:26px;top:758px;width:1183px;height:1px;background:#000;"></div>
<div style="left:0px;top:758px;width:25px;height:1px;background:#d9d9d9;"></div>
<div style="left:26px;top:778px;width:1183px;height:1px;background:#000;"></div>
<div style="left:0px;top:778px;width:25px;height:1px;background:#d9d9d9;"></div>
<div style="left:26px;top:798px;width:1183px;height:1px;background:#000;"></div>
<div style="left:0px;top:798px;width:25px;height:1px;background:#d9d9d9;"></div>
<div style="left:26px;top:818px;width:1183px;height:1px;background:#000;"></div>
<div style="left:0px;top:818px;width:25px;height:1px;background:#d9d9d9;"></div>
<div style="left:195px;top:209px;width:1px;height:603px;background:#000;"></div>
<div style="left:755px;top:209px;width:1px;height:603px;background:#000;"></div>
<div style="left:845px;top:209px;width:1px;height:603px;background:#000;"></div>
<div style="left:1010px;top:209px;width:1px;height:603px;background:#000;"></div>
<div style="left:1208px;top:209px;width:1px;height:603px;background:#000;"></div>
<div style="left:25px;top:208px;width:1px;height:604px;background:#a0a3a6;"></div>
<span class="t" style="left:9.38px;top:223px;font-size:13px;">1</span>
<span class="t" style="left:9.38px;top:243px;font-size:13px;">2</span>
<span class="t" style="left:9.38px;top:263px;font-size:13px;">3</span>
<span class="t" style="left:9.38px;top:283px;font-size:13px;">4</span>
<span class="t" style="left:9.38px;top:303px;font-size:13px;">5</span>
<span class="t" style="left:9.38px;top:323px;font-size:13px;">6</span>
<span class="t" style="left:9.38px;top:343px;font-size:13px;">7</span>
<span class="t" style="left:9.38px;top:363px;font-size:13px;">8</span>
<span class="t" style="left:9.38px;top:383px;font-size:13px;">9</span>
<span class="t" style="left:5.77px;top:403px;font-size:13px;">10</span>
<span class="t" style="left:6.25px;top:423px;font-size:13px;">11</span>
<span class="t" style="left:5.77px;top:443px;font-size:13px;">12</span>
<span class="t" style="left:5.77px;top:463px;font-size:13px;">13</span>
<span class="t" style="left:5.77px;top:483px;font-size:13px;">14</span>
<span class="t" style="left:5.77px;top:503px;font-size:13px;">15</span>
<span class="t" style="left:5.77px;top:523px;font-size:13px;">16</span>
<span class="t" style="left:5.77px;top:543px;font-size:13px;">17</span>
<span class="t" style="left:5.77px;top:563px;font-size:13px;">18</span>
<span class="t" style="left:5.77px;top:583px;font-size:13px;">19</span>
<span class="t" style="left:5.77px;top:603px;font-size:13px;">20</span>
<span class="t" style="left:5.77px;top:623px;font-size:13px;">21</span>
<span class="t" style="left:5.77px;top:643px;font-size:13px;">22</span>
<span class="t" style="left:5.77px;top:663px;font-size:13px;">23</span>
<span class="t" style="left:5.77px;top:683px;font-size:13px;">24</span>
<span class="t" style="left:5.77px;top:703px;font-size:13px;">25</span>
<span class="t" style="left:5.77px;top:723px;font-size:13px;">26</span>
<span class="t" style="left:5.77px;top:743px;font-size:13px;">27</span>
<span class="t" style="left:5.77px;top:763px;font-size:13px;">28</span>
<span class="t" style="left:5.77px;top:783px;font-size:13px;">29</span>
<span class="t" style="left:5.77px;top:803px;font-size:13px;">30</span>
<span class="t" style="left:71.40px;top:217px;font-size:13px;font-weight:700;color:#000;letter-spacing:0.087px;">Group Name</span>
<span class="t" style="left:434.70px;top:217px;font-size:13px;font-weight:700;color:#000;letter-spacing:-0.017px;">Ledger Name</span>
<span class="t" style="left:759.20px;top:217px;font-size:13px;font-weight:700;color:#000;letter-spacing:0.011px;">Parent Group</span>
<span class="t" style="left:850.45px;top:217px;font-size:13px;font-weight:700;color:#000;letter-spacing:-0.213px;">Last year Closing Amount</span>
<span class="t" style="left:1015.80px;top:217px;font-size:13px;font-weight:700;color:#000;letter-spacing:0.063px;">Current Year Opening Amount</span>
<span class="t" style="left:28.20px;top:243px;font-size:13px;color:#000;letter-spacing:0.135px;">Loans &amp; Advances (Asset)</span>
<span class="t" style="left:197.75px;top:243px;font-size:13px;color:#000;letter-spacing:0.418px;">ajixx kuxxx (petty cash)</span>
<span class="t" style="left:758.20px;top:243px;font-size:13px;color:#000;letter-spacing:0.240px;">1.Asset</span>
<span class="t" style="left:847.60px;top:243px;font-size:13px;color:#000;letter-spacing:-0.294px;">93701</span>
<span class="t" style="left:1012.60px;top:243px;font-size:13px;color:#000;letter-spacing:-0.294px;">93701</span>
<span class="t" style="left:28.20px;top:263px;font-size:13px;color:#000;letter-spacing:0.135px;">Loans &amp; Advances (Asset)</span>
<span class="t" style="left:197.75px;top:263px;font-size:13px;color:#000;letter-spacing:0.329px;">Ajxxh Kuxxx .P.B</span>
<span class="t" style="left:758.20px;top:263px;font-size:13px;color:#000;letter-spacing:0.240px;">1.Asset</span>
<span class="t" style="left:847.60px;top:263px;font-size:13px;color:#000;letter-spacing:-0.088px;">464118.09</span>
<span class="t" style="left:1012.60px;top:263px;font-size:13px;color:#000;letter-spacing:-0.088px;">464118.09</span>
<span class="t" style="left:28.20px;top:283px;font-size:13px;color:#000;letter-spacing:0.135px;">Loans &amp; Advances (Asset)</span>
<span class="t" style="left:197.75px;top:283px;font-size:13px;color:#000;letter-spacing:0.359px;">goxx (petty cash)</span>
<span class="t" style="left:758.20px;top:283px;font-size:13px;color:#000;letter-spacing:0.240px;">1.Asset</span>
<span class="t" style="left:847.60px;top:283px;font-size:13px;color:#000;letter-spacing:-0.284px;">195715</span>
<span class="t" style="left:1012.60px;top:283px;font-size:13px;color:#000;letter-spacing:-0.284px;">195715</span>
<span class="t" style="left:28.20px;top:303px;font-size:13px;color:#000;letter-spacing:0.135px;">Loans &amp; Advances (Asset)</span>
<span class="t" style="left:197.75px;top:303px;font-size:13px;color:#000;letter-spacing:-0.161px;">Goxx. R</span>
<span class="t" style="left:758.20px;top:303px;font-size:13px;color:#000;letter-spacing:0.240px;">1.Asset</span>
<span class="t" style="left:847.60px;top:303px;font-size:13px;color:#000;letter-spacing:-0.284px;">398468</span>
<span class="t" style="left:1012.60px;top:303px;font-size:13px;color:#000;letter-spacing:-0.284px;">398468</span>
<span class="t" style="left:28.20px;top:323px;font-size:13px;color:#000;letter-spacing:0.135px;">Loans &amp; Advances (Asset)</span>
<span class="t" style="left:197.75px;top:323px;font-size:13px;color:#000;letter-spacing:0.082px;">It Refund For The Fy 2017-18</span>
<span class="t" style="left:758.20px;top:323px;font-size:13px;color:#000;letter-spacing:0.240px;">1.Asset</span>
<span class="t" style="left:847.60px;top:323px;font-size:13px;color:#000;letter-spacing:-0.278px;">1034314</span>
<span class="t" style="left:1012.60px;top:323px;font-size:13px;color:#000;letter-spacing:-0.278px;">1034314</span>
<span class="t" style="left:28.20px;top:343px;font-size:13px;color:#000;letter-spacing:0.135px;">Loans &amp; Advances (Asset)</span>
<span class="t" style="left:197.75px;top:343px;font-size:13px;color:#000;letter-spacing:0.524px;">Prepaid Expenditure</span>
<span class="t" style="left:758.20px;top:343px;font-size:13px;color:#000;letter-spacing:0.240px;">1.Asset</span>
<span class="t" style="left:847.60px;top:343px;font-size:13px;color:#000;">0</span>
<span class="t" style="left:1012.60px;top:343px;font-size:13px;color:#000;">0</span>
<span class="t" style="left:28.20px;top:363px;font-size:13px;color:#000;letter-spacing:0.135px;">Loans &amp; Advances (Asset)</span>
<span class="t" style="left:197.75px;top:363px;font-size:13px;color:#000;letter-spacing:0.253px;">S. Venxxxxshan - Advance</span>
<span class="t" style="left:758.20px;top:363px;font-size:13px;color:#000;letter-spacing:0.240px;">1.Asset</span>
<span class="t" style="left:847.60px;top:363px;font-size:13px;color:#000;letter-spacing:-0.294px;">28891</span>
<span class="t" style="left:1012.60px;top:363px;font-size:13px;color:#000;letter-spacing:-0.294px;">28891</span>
<span class="t" style="left:28.20px;top:383px;font-size:13px;color:#000;letter-spacing:0.135px;">Loans &amp; Advances (Asset)</span>
<span class="t" style="left:197.75px;top:383px;font-size:13px;color:#000;letter-spacing:-0.300px;">SHAMXXXXR S PAXXN-LOANS AND ADVANCES</span>
<span class="t" style="left:758.20px;top:383px;font-size:13px;color:#000;letter-spacing:0.240px;">1.Asset</span>
<span class="t" style="left:847.60px;top:383px;font-size:13px;color:#000;letter-spacing:-0.284px;">250000</span>
<span class="t" style="left:1012.60px;top:383px;font-size:13px;color:#000;letter-spacing:-0.284px;">250000</span>
<span class="t" style="left:28.20px;top:403px;font-size:13px;color:#000;letter-spacing:0.135px;">Loans &amp; Advances (Asset)</span>
<div class="clip" style="left:196px;top:399px;width:559px;height:19px">
<span class="t" style="left:1.75px;top:4px;font-size:13px;color:#000;letter-spacing:-0.300px;transform:scaleX(0.9644);">SHXXXO SHIXXXNG &amp; LOXXXTICS INDIA PRIVATE LIMITEDEMPLOYEESGROUPGRATUITYTRUST</span>
</div>
<span class="t" style="left:758.20px;top:403px;font-size:13px;color:#000;letter-spacing:0.240px;">1.Asset</span>
<span class="t" style="left:847.60px;top:403px;font-size:13px;color:#000;letter-spacing:-0.294px;">25000</span>
<span class="t" style="left:1012.60px;top:403px;font-size:13px;color:#000;letter-spacing:-0.294px;">25000</span>
<span class="t" style="left:28.20px;top:423px;font-size:13px;color:#000;letter-spacing:0.135px;">Loans &amp; Advances (Asset)</span>
<span class="t" style="left:197.75px;top:423px;font-size:13px;color:#000;letter-spacing:-0.300px;transform:scaleX(0.9873);">SOXX SIXXH SHAXXXER (LOAN &amp; ADVANCE)</span>
<span class="t" style="left:758.20px;top:423px;font-size:13px;color:#000;letter-spacing:0.240px;">1.Asset</span>
<span class="t" style="left:847.60px;top:423px;font-size:13px;color:#000;letter-spacing:-0.284px;">250000</span>
<span class="t" style="left:1012.60px;top:423px;font-size:13px;color:#000;letter-spacing:-0.284px;">250000</span>
<span class="t" style="left:28.20px;top:443px;font-size:13px;color:#000;letter-spacing:0.135px;">Loans &amp; Advances (Asset)</span>
<span class="t" style="left:197.75px;top:443px;font-size:13px;color:#000;letter-spacing:-0.300px;transform:scaleX(0.9675);">STXXFWELXXXE ADVANCE</span>
<span class="t" style="left:758.20px;top:443px;font-size:13px;color:#000;letter-spacing:0.240px;">1.Asset</span>
<span class="t" style="left:847.60px;top:443px;font-size:13px;color:#000;">0</span>
<span class="t" style="left:1012.60px;top:443px;font-size:13px;color:#000;">0</span>
<span class="t" style="left:28.20px;top:463px;font-size:13px;color:#000;letter-spacing:0.570px;">Deposit</span>
<span class="t" style="left:197.75px;top:463px;font-size:13px;color:#000;letter-spacing:0.506px;">Accured Interest</span>
<span class="t" style="left:758.20px;top:463px;font-size:13px;color:#000;letter-spacing:0.240px;">1.Asset</span>
<span class="t" style="left:847.60px;top:463px;font-size:13px;color:#000;letter-spacing:-0.199px;">91200.6</span>
<span class="t" style="left:1012.60px;top:463px;font-size:13px;color:#000;letter-spacing:-0.199px;">91200.6</span>
<span class="t" style="left:28.20px;top:483px;font-size:13px;color:#000;letter-spacing:0.570px;">Deposit</span>
<span class="t" style="left:198.25px;top:483px;font-size:13px;color:#000;letter-spacing:0.286px;">Fixed Deposit (Cha)</span>
<span class="t" style="left:758.20px;top:483px;font-size:13px;color:#000;letter-spacing:0.240px;">1.Asset</span>
<span class="t" style="left:847.60px;top:483px;font-size:13px;color:#000;letter-spacing:-0.284px;">500000</span>
<span class="t" style="left:1012.60px;top:483px;font-size:13px;color:#000;letter-spacing:-0.284px;">500000</span>
<span class="t" style="left:28.20px;top:503px;font-size:13px;color:#000;letter-spacing:0.570px;">Deposit</span>
<span class="t" style="left:198.25px;top:503px;font-size:13px;color:#000;letter-spacing:-0.300px;transform:scaleX(0.9774);">FIXED DEPOSIT 1345149911</span>
<span class="t" style="left:758.20px;top:503px;font-size:13px;color:#000;letter-spacing:0.240px;">1.Asset</span>
<span class="t" style="left:847.60px;top:503px;font-size:13px;color:#000;letter-spacing:-0.284px;">361523</span>
<span class="t" style="left:1012.60px;top:503px;font-size:13px;color:#000;letter-spacing:-0.284px;">361523</span>
<span class="t" style="left:28.20px;top:523px;font-size:13px;color:#000;letter-spacing:0.570px;">Deposit</span>
<span class="t" style="left:198.25px;top:523px;font-size:13px;color:#000;letter-spacing:-0.300px;transform:scaleX(0.9717);">FIXED DEPOSIT 1345958674</span>
<span class="t" style="left:758.20px;top:523px;font-size:13px;color:#000;letter-spacing:0.240px;">1.Asset</span>
<span class="t" style="left:847.60px;top:523px;font-size:13px;color:#000;letter-spacing:-0.170px;">-74396</span>
<span class="t" style="left:1012.60px;top:523px;font-size:13px;color:#000;letter-spacing:-0.170px;">-74396</span>
<span class="t" style="left:28.20px;top:543px;font-size:13px;color:#000;letter-spacing:0.570px;">Deposit</span>
<span class="t" style="left:198.25px;top:543px;font-size:13px;color:#000;letter-spacing:-0.300px;transform:scaleX(0.9717);">FIXED DEPOSIT 1345958681</span>
<span class="t" style="left:758.20px;top:543px;font-size:13px;color:#000;letter-spacing:0.240px;">1.Asset</span>
<span class="t" style="left:847.60px;top:543px;font-size:13px;color:#000;letter-spacing:-0.278px;">5080578</span>
<span class="t" style="left:1012.60px;top:543px;font-size:13px;color:#000;letter-spacing:-0.278px;">5080578</span>
<span class="t" style="left:28.20px;top:563px;font-size:13px;color:#000;letter-spacing:0.570px;">Deposit</span>
<span class="t" style="left:198.25px;top:563px;font-size:13px;color:#000;letter-spacing:-0.300px;transform:scaleX(0.9717);">FIXED DEPOSIT 1346931041</span>
<span class="t" style="left:758.20px;top:563px;font-size:13px;color:#000;letter-spacing:0.240px;">1.Asset</span>
<span class="t" style="left:847.60px;top:563px;font-size:13px;color:#000;letter-spacing:-0.148px;">-325889.83</span>
<span class="t" style="left:1012.60px;top:563px;font-size:13px;color:#000;letter-spacing:-0.148px;">-325889.83</span>
<span class="t" style="left:28.20px;top:583px;font-size:13px;color:#000;letter-spacing:0.570px;">Deposit</span>
<span class="t" style="left:198.25px;top:583px;font-size:13px;color:#000;letter-spacing:-0.300px;transform:scaleX(0.9717);">FIXED DEPOSIT 1346966913</span>
<span class="t" style="left:758.20px;top:583px;font-size:13px;color:#000;letter-spacing:0.240px;">1.Asset</span>
<span class="t" style="left:847.60px;top:583px;font-size:13px;color:#000;letter-spacing:-0.117px;">1016112</span>
<span class="t" style="left:1012.60px;top:583px;font-size:13px;color:#000;letter-spacing:-0.117px;">1016112</span>
<span class="t" style="left:28.20px;top:603px;font-size:13px;color:#000;letter-spacing:0.570px;">Deposit</span>
<span class="t" style="left:198.25px;top:603px;font-size:13px;color:#000;letter-spacing:-0.300px;transform:scaleX(0.9781);">FIXED DEPOSIT 8440240624005968</span>
<span class="t" style="left:758.20px;top:603px;font-size:13px;color:#000;letter-spacing:0.240px;">1.Asset</span>
<span class="t" style="left:847.60px;top:603px;font-size:13px;color:#000;">0</span>
<span class="t" style="left:1012.60px;top:603px;font-size:13px;color:#000;">0</span>
<span class="t" style="left:28.20px;top:623px;font-size:13px;color:#000;letter-spacing:0.570px;">Deposit</span>
<span class="t" style="left:198.25px;top:623px;font-size:13px;color:#000;letter-spacing:-0.300px;transform:scaleX(0.9873);">FIXED DEPOSIT 8440241112008266</span>
<span class="t" style="left:758.20px;top:623px;font-size:13px;color:#000;letter-spacing:0.240px;">1.Asset</span>
<span class="t" style="left:847.60px;top:623px;font-size:13px;color:#000;">0</span>
<span class="t" style="left:1012.60px;top:623px;font-size:13px;color:#000;">0</span>
<span class="t" style="left:28.20px;top:643px;font-size:13px;color:#000;letter-spacing:0.570px;">Deposit</span>
<span class="t" style="left:198.25px;top:643px;font-size:13px;color:#000;letter-spacing:-0.300px;transform:scaleX(0.9827);">FIXED DEPOSIT 8440241128008549</span>
<span class="t" style="left:758.20px;top:643px;font-size:13px;color:#000;letter-spacing:0.240px;">1.Asset</span>
<span class="t" style="left:847.60px;top:643px;font-size:13px;color:#000;">0</span>
<span class="t" style="left:1012.60px;top:643px;font-size:13px;color:#000;">0</span>
<span class="t" style="left:28.20px;top:663px;font-size:13px;color:#000;letter-spacing:0.570px;">Deposit</span>
<span class="t" style="left:198.25px;top:663px;font-size:13px;color:#000;letter-spacing:-0.300px;transform:scaleX(0.9781);">FIXED DEPOSIT 8440241209008761</span>
<span class="t" style="left:758.20px;top:663px;font-size:13px;color:#000;letter-spacing:0.240px;">1.Asset</span>
<span class="t" style="left:847.60px;top:663px;font-size:13px;color:#000;">0</span>
<span class="t" style="left:1012.60px;top:663px;font-size:13px;color:#000;">0</span>
<span class="t" style="left:28.20px;top:683px;font-size:13px;color:#000;letter-spacing:0.570px;">Deposit</span>
<span class="t" style="left:198.25px;top:683px;font-size:13px;color:#000;letter-spacing:-0.300px;transform:scaleX(0.9781);">FIXED DEPOSIT 8440250224009485</span>
<span class="t" style="left:758.20px;top:683px;font-size:13px;color:#000;letter-spacing:0.240px;">1.Asset</span>
<span class="t" style="left:847.60px;top:683px;font-size:13px;color:#000;letter-spacing:-0.269px;">32500000</span>
<span class="t" style="left:1012.60px;top:683px;font-size:13px;color:#000;letter-spacing:-0.269px;">32500000</span>
<span class="t" style="left:28.20px;top:703px;font-size:13px;color:#000;letter-spacing:0.570px;">Deposit</span>
<span class="t" style="left:198.25px;top:703px;font-size:13px;color:#000;letter-spacing:-0.300px;transform:scaleX(0.9808);">FIXED DEPOSIT-1347761203</span>
<span class="t" style="left:758.20px;top:703px;font-size:13px;color:#000;letter-spacing:0.240px;">1.Asset</span>
<span class="t" style="left:847.60px;top:703px;font-size:13px;color:#000;letter-spacing:-0.278px;">5248888</span>
<span class="t" style="left:1012.60px;top:703px;font-size:13px;color:#000;letter-spacing:-0.278px;">5248888</span>
<span class="t" style="left:28.20px;top:723px;font-size:13px;color:#000;letter-spacing:0.359px;">Sundry Debtors</span>
<span class="t" style="left:197.75px;top:723px;font-size:13px;color:#000;letter-spacing:-0.300px;transform:scaleX(0.9532);">ONXXXXRCE WORLDXXXE LOGIXXXS-DR</span>
<span class="t" style="left:758.20px;top:723px;font-size:13px;color:#000;letter-spacing:0.240px;">1.Asset</span>
<span class="t" style="left:847.60px;top:723px;font-size:13px;color:#000;letter-spacing:-0.300px;">7080</span>
<span class="t" style="left:1012.60px;top:723px;font-size:13px;color:#000;letter-spacing:-0.300px;">7080</span>
<span class="t" style="left:28.20px;top:743px;font-size:13px;color:#000;letter-spacing:0.232px;">Local Debtors</span>
<span class="t" style="left:197.75px;top:743px;font-size:13px;color:#000;letter-spacing:-0.300px;transform:scaleX(0.9571);">MODXXX ARCHITECTURE</span>
<span class="t" style="left:758.20px;top:743px;font-size:13px;color:#000;letter-spacing:0.240px;">1.Asset</span>
<span class="t" style="left:847.60px;top:743px;font-size:13px;color:#000;">1</span>
<span class="t" style="left:1012.60px;top:743px;font-size:13px;color:#000;">1</span>
<span class="t" style="left:28.20px;top:763px;font-size:13px;color:#000;letter-spacing:0.232px;">Local Debtors</span>
<span class="t" style="left:197.75px;top:763px;font-size:13px;color:#000;letter-spacing:-0.300px;transform:scaleX(0.9616);">4X LOGXXXXC SOLUTIONS PVT LTD-DR</span>
<span class="t" style="left:758.20px;top:763px;font-size:13px;color:#000;letter-spacing:0.240px;">1.Asset</span>
<span class="t" style="left:847.60px;top:763px;font-size:13px;color:#000;">0</span>
<span class="t" style="left:1012.60px;top:763px;font-size:13px;color:#000;">0</span>
<span class="t" style="left:28.20px;top:783px;font-size:13px;color:#000;letter-spacing:0.232px;">Local Debtors</span>
<span class="t" style="left:197.75px;top:783px;font-size:13px;color:#000;letter-spacing:-0.300px;">A &amp;X MICRXXX PVT LTD</span>
<span class="t" style="left:758.20px;top:783px;font-size:13px;color:#000;letter-spacing:0.240px;">1.Asset</span>
<span class="t" style="left:847.60px;top:783px;font-size:13px;color:#000;">0</span>
<span class="t" style="left:1012.60px;top:783px;font-size:13px;color:#000;">0</span>
<span class="t" style="left:28.20px;top:803px;font-size:13px;color:#000;letter-spacing:0.232px;">Local Debtors</span>
<span class="t" style="left:197.75px;top:803px;font-size:13px;color:#000;letter-spacing:-0.272px;">A HAXXXODT INDIA PVT LTD - DR</span>
<span class="t" style="left:758.20px;top:803px;font-size:13px;color:#000;letter-spacing:0.240px;">1.Asset</span>
<span class="t" style="left:847.60px;top:803px;font-size:13px;color:#000;">0</span>
<span class="t" style="left:1012.60px;top:803px;font-size:13px;color:#000;">0</span>
</div>
<div id="vscroll">
<div style="left:1422px;top:191px;width:15px;height:620px;background:#f0f0f0;"></div>
<div style="left:1422px;top:191px;width:15px;height:15px;background:#fff;border:1px solid #ababab;box-sizing:border-box;"></div>
<svg style="left:1426px;top:196px" width="7" height="4" viewBox="0 0 7 4"><path d="M0 4L3.5 0L7 4z" fill="#777"/></svg>
<div style="left:1422px;top:206px;width:15px;height:17px;background:#fff;border:1px solid #ababab;box-sizing:border-box;"></div>
<div style="left:1422px;top:796px;width:15px;height:15px;background:#fff;border:1px solid #ababab;box-sizing:border-box;"></div>
<svg style="left:1426px;top:802px" width="7" height="4" viewBox="0 0 7 4"><path d="M0 0L3.5 4L7 0z" fill="#777"/></svg>
</div>
<div id="sheetbar">
<div style="left:0px;top:810px;width:1419px;height:1px;background:#ababab;"></div>
<div style="left:0px;top:811px;width:1440px;height:27px;background:#f1f1f1;"></div>
<svg style="left:27px;top:819px" width="5" height="8" viewBox="0 0 5 8"><path d="M5 0V8L0 4z" fill="#c8c8c8"/></svg>
<svg style="left:56px;top:819px" width="5" height="8" viewBox="0 0 5 8"><path d="M0 0V8L5 4z" fill="#c8c8c8"/></svg>
<div style="left:100px;top:810px;width:221px;height:23px;background:#fff;border-left:1px solid #ababab;border-right:1px solid #ababab;box-sizing:border-box;"></div>
<div style="left:100px;top:833px;width:221px;height:2px;background:#217346;"></div>
<span class="t" style="left:111.55px;top:817px;font-size:13px;font-weight:700;color:#217346;letter-spacing:-0.204px;">2152-AuditTrail_OB_Comparison</span>
<svg style="left:354px;top:815px" width="17" height="17" viewBox="0 0 17 17"><circle cx="8.5" cy="8.5" r="7.3" fill="#fff" stroke="#707070" stroke-width="1.5"/><path d="M4.4 8.5h8.2M8.5 4.4v8.2" stroke="#666" stroke-width="1.9"/></svg>
<div style="left:864px;top:820px;width:2px;height:2px;background:#b0b0b0;"></div>
<div style="left:864px;top:824px;width:2px;height:2px;background:#b0b0b0;"></div>
<div style="left:864px;top:828px;width:2px;height:2px;background:#b0b0b0;"></div>
<div style="left:881px;top:817px;width:538px;height:15px;background:#e8e8e8;"></div>
<div style="left:881px;top:817px;width:15px;height:15px;background:#fff;border:1px solid #ababab;box-sizing:border-box;"></div>
<svg style="left:886px;top:821px" width="4" height="7" viewBox="0 0 4 7"><path d="M4 0V7L0 3.5z" fill="#777"/></svg>
<div style="left:895px;top:817px;width:445px;height:15px;background:#fff;border:1px solid #ababab;box-sizing:border-box;"></div>
<div style="left:1404px;top:817px;width:15px;height:15px;background:#fff;border:1px solid #ababab;box-sizing:border-box;"></div>
<svg style="left:1410px;top:821px" width="4" height="7" viewBox="0 0 4 7"><path d="M0 0V7L4 3.5z" fill="#777"/></svg>
</div>
<div id="status">
<div style="left:0px;top:838px;width:1440px;height:22px;background:#217346;"></div>
<span class="t" style="left:7.00px;top:844px;font-size:11.5px;color:#fff;letter-spacing:-0.300px;transform:scaleX(0.8718);">READY</span>
<div style="left:1149px;top:838px;width:37px;height:22px;background:#14683a;"></div>
<svg style="left:1160px;top:843px" width="13" height="13" viewBox="0 0 13 13"><rect x="0.5" y="0.5" width="12" height="11" fill="none" stroke="#fff"/><path d="M0.5 4.5h12M0.5 8.5h12M4.5 0.5v11M8.5 0.5v11" stroke="#fff" fill="none"/></svg><svg style="left:1199px;top:843px" width="13" height="13" viewBox="0 0 13 13"><rect x="0.5" y="0.5" width="12" height="11" fill="none" stroke="#fff"/><rect x="3.5" y="2.5" width="6" height="7" fill="none" stroke="#fff"/><path d="M5 4.5h3M5 6.5h3" stroke="#fff"/></svg><svg style="left:1236px;top:843px" width="14" height="13" viewBox="0 0 14 13"><rect x="0.5" y="0.5" width="13" height="11" fill="none" stroke="#fff"/><path d="M1 1h9v6.4H1z" fill="#fff"/><path d="M4.5 1V7.4" stroke="#217346" stroke-width="1.2"/></svg>
<div style="left:1397px;top:838px;width:43px;height:22px;background:#439467;"></div>
<div style="left:1267px;top:848px;width:6px;height:2px;background:#fff;"></div>
<div style="left:1277px;top:848px;width:100px;height:1px;background:#fff;"></div>
<div style="left:1325px;top:843px;width:4px;height:11px;background:#fff;"></div>
<div style="left:1381px;top:848px;width:8px;height:2px;background:#fff;"></div>
<div style="left:1384px;top:845px;width:2px;height:8px;background:#fff;"></div>
<span class="t" style="left:1404.20px;top:844px;font-size:11.5px;color:#fff;letter-spacing:-0.300px;transform:scaleX(0.9466);">100%</span>
</div>
</body></html>
